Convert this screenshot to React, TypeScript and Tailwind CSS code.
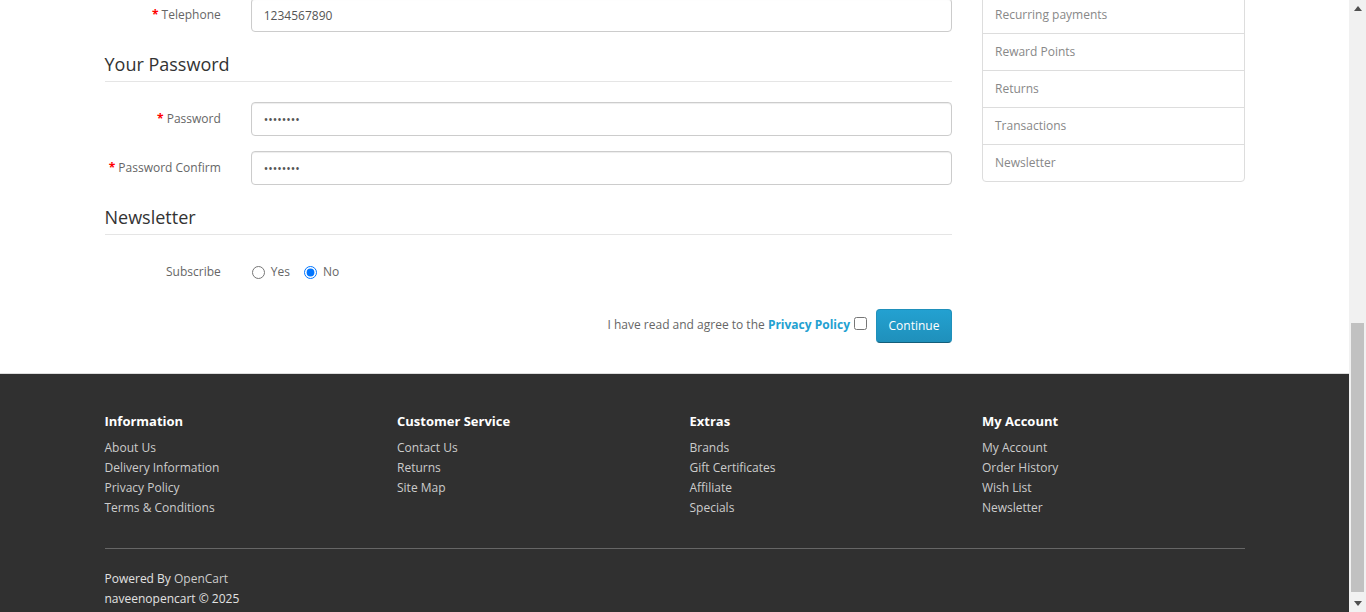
import React from "react";

const font = { fontFamily: '"Open Sans", "Liberation Sans", sans-serif' };

function Label({ text, required }: { text: string; required?: boolean }) {
  return (
    <div className="w-[146.25px] shrink-0 px-[15px] pt-[7px] text-right leading-5 text-[#666]">
      {required && <span className="font-bold text-[#f00]">* </span>}
      {text}
    </div>
  );
}

function Field({
  label,
  value,
  type = "text",
  className = "",
}: {
  label: string;
  value: string;
  type?: string;
  className?: string;
}) {
  return (
    <div className={"flex mx-[-15px] mb-[15px] " + className}>
      <Label text={label} required />
      <div className="flex-1 px-[15px]">
        <input
          type={type}
          readOnly
          value={value}
          className="block w-full h-[34px] px-[12px] border border-[#ccc] rounded-[4px] text-[12px] text-[#555] bg-white shadow-[inset_0_1px_1px_rgba(0,0,0,0.075)] outline-none"
          style={font}
        />
      </div>
    </div>
  );
}

function Legend({ text }: { text: string }) {
  return (
    <div className="h-[35px] py-[7px] text-[18px] leading-5 text-[#333] border-b border-[#e5e5e5] mb-[20px]">
      {text}
    </div>
  );
}

const sideItems = ["Recurring payments", "Reward Points", "Returns", "Transactions", "Newsletter"];

const footerCols = [
  { title: "Information", links: ["About Us", "Delivery Information", "Privacy Policy", "Terms & Conditions"] },
  { title: "Customer Service", links: ["Contact Us", "Returns", "Site Map"] },
  { title: "Extras", links: ["Brands", "Gift Certificates", "Affiliate", "Specials"] },
  { title: "My Account", links: ["My Account", "Order History", "Wish List", "Newsletter"] },
];

export default function App() {
  return (
    <div className="flex h-[612px] w-full overflow-hidden bg-white text-[12px]" style={font}>
      <div className="flex-1 flex flex-col min-w-0">
        {/* Main content */}
        <div className="w-[1170px] mx-auto px-[15px] h-[373px] shrink-0">
          <div className="flex mx-[-15px]">
            <div className="w-[877.5px] px-[15px]">
              <Field label="Telephone" value="1234567890" className="mt-[-2px]" />
              <Legend text="Your Password" />
              <Field label="Password" value="12345678" type="password" />
              <Field label="Password Confirm" value="12345678" type="password" />
              <Legend text="Newsletter" />
              <div className="flex mx-[-15px] h-[34px]">
                <Label text="Subscribe" />
                <div className="flex-1 px-[15px] pt-[7px] flex items-start leading-5 text-[#666]">
                  <label className="flex items-center h-5 ml-[1px]">
                    <input type="radio" name="nl" className="m-0 w-[13px] h-[13px] mr-[6px]" readOnly />
                    <span>Yes</span>
                  </label>
                  <label className="flex items-center h-5 ml-[14px]">
                    <input type="radio" name="nl" defaultChecked className="m-0 w-[13px] h-[13px] mr-[6px]" />
                    <span>No</span>
                  </label>
                </div>
              </div>
              <div className="flex justify-end items-start mt-[20px]">
                <div className="mt-[6px] leading-5 text-[#666]">
                  I have read and agree to the{" "}
                  <span className="font-bold text-[#23a1d1]">Privacy Policy</span>
                </div>
                <input type="checkbox" className="m-0 ml-[4px] mt-[8px] w-[13px] h-[13px]" />
                <button
                  className="ml-[9px] h-[34px] w-[76px] rounded-[4px] border border-[#1f90bb] border-b-[#145e7a] bg-gradient-to-b from-[#23a1d1] to-[#1f90bb] text-white text-[12px] leading-5"
                  style={font}
                >
                  Continue
                </button>
              </div>
            </div>
            <div className="w-[292.5px] px-[15px]">
              <div className="mt-[-4px] flex flex-col">
                {sideItems.map((s, i) => (
                  <div
                    key={s}
                    className={
                      "border border-[#ddd] px-[12px] py-[8px] leading-5 text-[#888] mb-[-1px] " +
                      (i === sideItems.length - 1 ? "rounded-b-[4px]" : "")
                    }
                  >
                    {s}
                  </div>
                ))}
              </div>
            </div>
          </div>
        </div>
        {/* Footer */}
        <div className="flex-1 border-t border-[#ddd] bg-[#303030]">
          <div className="w-[1170px] mx-auto px-[15px] pt-[37px]">
            <div className="flex mx-[-15px]">
              {footerCols.map((c) => (
                <div key={c.title} className="w-[292.5px] px-[15px]">
                  <div className="text-[13px] font-bold leading-5 text-white mb-[7px]">{c.title}</div>
                  <div className="flex flex-col">
                    {c.links.map((l) => (
                      <div key={l} className="leading-5 text-[#ccc]">
                        {l}
                      </div>
                    ))}
                  </div>
                </div>
              ))}
            </div>
            <div className="mt-[30px] border-b border-[#666]" />
            <div className="mt-[20px] leading-5 text-[#e2e2e2]">
              Powered By <span className="text-[#ccc]">OpenCart</span>
              <br />
              naveenopencart © 2025
            </div>
          </div>
        </div>
      </div>
      {/* Scrollbar */}
      <div className="w-[17px] shrink-0 bg-[#f1f1f1] flex flex-col items-center">
        <div className="h-[17px] flex items-center justify-center">
          <svg width="8" height="5" viewBox="0 0 8 5">
            <polygon points="0,5 8,5 4,0" fill="#505050" />
          </svg>
        </div>
        <div className="flex-1 w-full flex flex-col items-center">
          <div className="mt-[306px] h-[269px] w-[13px] bg-[#c1c1c1]" />
        </div>
        <div className="h-[17px] flex items-center justify-center">
          <svg width="8" height="5" viewBox="0 0 8 5">
            <polygon points="0,0 8,0 4,5" fill="#505050" />
          </svg>
        </div>
      </div>
    </div>
  );
}
